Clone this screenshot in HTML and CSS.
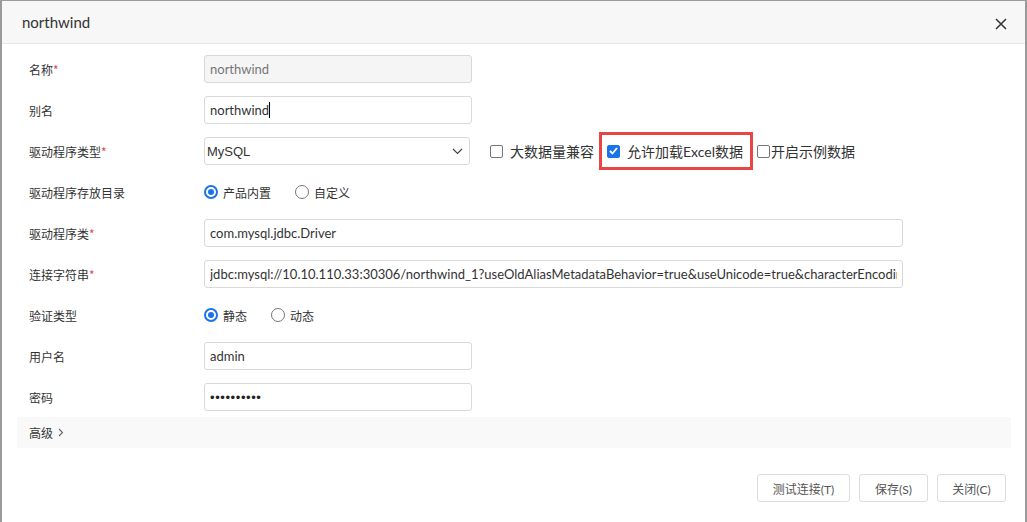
FILE: index.html
```html
<!DOCTYPE html>
<html lang="zh-CN">
  <head>
    <meta charset="UTF-8" />
    <title>northwind</title>
    <link rel="stylesheet" href="styles.css">
  </head>
  <body>
    <div class="dialog">
      <div class="dialog-header">
        <span class="dialog-title">northwind</span>
        <svg class="close" width="12" height="12" viewBox="0 0 12 12">
          <path d="M1 1 L11 11 M11 1 L1 11" stroke="#333" stroke-width="1.5" fill="none" />
        </svg>
      </div>

      <div class="dialog-body">
        <div class="row">
          <div class="label">名称<span class="req">*</span></div>
          <input class="field disabled" type="text" value="northwind" disabled />
        </div>
        <div class="row">
          <div class="label">别名</div>
          <div class="field fake">northwind<span class="caret"></span></div>
        </div>
        <div class="row">
          <div class="label">驱动程序类型<span class="req">*</span></div>
          <div class="field select">
            <span>MySQL</span>
            <svg width="11" height="7" viewBox="0 0 11 7">
              <path d="M1 1 L5.5 5.5 L10 1" stroke="#444" stroke-width="1.2" fill="none" />
            </svg>
          </div>
          <label class="check first">
            <span class="box"></span>大数据量兼容
          </label>
          <div class="highlight">
            <label class="check">
              <span class="box checked">
                <svg width="9" height="8" viewBox="0 0 9 8">
                  <path d="M1 4 L3.5 6.5 L8 1" stroke="#fff" stroke-width="1.8" fill="none" />
                </svg>
              </span>允许加载Excel数据
            </label>
          </div>
          <label class="check tight">
            <span class="box"></span>开启示例数据
          </label>
        </div>
        <div class="row">
          <div class="label">驱动程序存放目录</div>
          <label class="radio"><span class="dot on"></span>产品内置</label>
          <label class="radio"><span class="dot"></span>自定义</label>
        </div>
        <div class="row">
          <div class="label">驱动程序类<span class="req">*</span></div>
          <input class="field wide" type="text" value="com.mysql.jdbc.Driver" />
        </div>
        <div class="row">
          <div class="label">连接字符串<span class="req">*</span></div>
          <input class="field wide" type="text" value="jdbc:mysql://10.10.110.33:30306/northwind_1?useOldAliasMetadataBehavior=true&amp;useUnicode=true&amp;characterEncoding=UTF-8" />
        </div>
        <div class="row">
          <div class="label">验证类型</div>
          <label class="radio"><span class="dot on"></span>静态</label>
          <label class="radio"><span class="dot"></span>动态</label>
        </div>
        <div class="row">
          <div class="label">用户名</div>
          <input class="field" type="text" value="admin" />
        </div>
        <div class="row">
          <div class="label">密码</div>
          <div class="field fake dots">••••••••••</div>
        </div>

        <div class="advanced">
          高级
          <svg class="chev" width="6" height="9" viewBox="0 0 6 9">
            <path d="M1 1 L4.5 4.5 L1 8" stroke="#666" stroke-width="1.1" fill="none" />
          </svg>
        </div>
      </div>

      <div class="dialog-footer">
        <button class="btn test">测试连接(T)</button>
        <button class="btn">保存(S)</button>
        <button class="btn">关闭(C)</button>
      </div>
    </div>
  </body>
</html>
```

FILE: styles.css
```css
body {
  margin: 0;
  width: 1027px;
  height: 522px;
  overflow: hidden;
  background: #fff;
  font-family: Lato, "Noto Sans CJK SC", sans-serif;
  color: #333;
}

.dialog {
  box-sizing: border-box;
  width: 1027px;
  height: 522px;
  border-top: 1px solid #9a9a9a;
  border-left: 2px solid #9a9a9a;
  border-right: 2px solid #9a9a9a;
  background: #fff;
}

.dialog-header {
  height: 42px;
  background: #f7f7f7;
  border-bottom: 1px solid #e6e6e6;
  display: flex;
  align-items: center;
  justify-content: space-between;
  padding: 0 18px 0 20px;
}

.dialog-title {
  font-size: 15px;
  color: #333;
}

.close {
  margin-top: 3px;
}

.dialog-body {
  padding: 11px 14px 0 15px;
}

.row {
  display: flex;
  align-items: center;
  height: 28px;
  margin-bottom: 13px;
}

.label {
  width: 187px;
  padding-left: 12px;
  box-sizing: border-box;
  font-family: "Noto Sans CJK SC", sans-serif;
  font-size: 12px;
  color: #333;
}

.req {
  color: #e5484d;
}

.field {
  box-sizing: border-box;
  width: 268px;
  height: 28px;
  border: 1px solid #d9d9d9;
  border-radius: 3px;
  padding: 0 5px;
  font-family: Lato, "Noto Sans CJK SC", sans-serif;
  font-size: 13px;
  color: #333;
  background: #fff;
  outline: none;
}

.field.disabled {
  background: #f5f5f5;
  color: #777;
}

.field.fake {
  display: flex;
  align-items: center;
}

.field.dots {
  font-family: "Liberation Sans", sans-serif;
  font-size: 13px;
  letter-spacing: 0.6px;
  color: #222;
}

.caret {
  display: inline-block;
  width: 1px;
  height: 16px;
  background: #000;
}

.field.wide {
  width: 699px;
}

.field.select {
  width: 266px;
  display: flex;
  align-items: center;
  justify-content: space-between;
  padding: 0 6px 0 2px;
  font-family: "Liberation Sans", sans-serif;
}

.check {
  display: flex;
  align-items: center;
  font-family: Lato, "Noto Sans CJK SC", sans-serif;
  font-size: 14px;
  color: #333;
}

.check.first {
  margin-left: 20px;
}

.check.tight {
  margin-left: 4px;
}

.check .box {
  box-sizing: border-box;
  width: 13px;
  height: 13px;
  border: 1px solid #767676;
  border-radius: 2px;
  margin-right: 7px;
  display: flex;
  align-items: center;
  justify-content: center;
}

.check.tight .box {
  margin-right: 1px;
}

.check .box.checked {
  background: #1a73e8;
  border-color: #1a73e8;
}

.highlight {
  box-sizing: border-box;
  height: 38px;
  margin-left: 5px;
  border: 3px solid #e84646;
  padding: 0 7px 0 5px;
  display: flex;
  align-items: center;
}

.radio {
  display: flex;
  align-items: center;
  font-family: "Noto Sans CJK SC", sans-serif;
  font-size: 12px;
  color: #333;
  margin-right: 24px;
}

.dot {
  box-sizing: border-box;
  width: 14px;
  height: 14px;
  border: 1px solid #767676;
  border-radius: 50%;
  margin-right: 5px;
  position: relative;
}

.dot.on {
  border: 2px solid #1a73e8;
}

.dot.on::after {
  content: "";
  position: absolute;
  left: 2px;
  top: 2px;
  width: 6px;
  height: 6px;
  border-radius: 50%;
  background: #1a73e8;
}

.advanced {
  margin-top: -7px;
  height: 31px;
  background: #f9f9fa;
  display: flex;
  align-items: center;
  padding-left: 12px;
  font-family: "Noto Sans CJK SC", sans-serif;
  font-size: 12px;
  color: #333;
}

.chev {
  margin-left: 5px;
}

.dialog-footer {
  display: flex;
  justify-content: flex-end;
  gap: 9px;
  padding: 26px 19px 0 0;
}

.btn {
  height: 28px;
  width: 69px;
  border: 1px solid #dcdcdc;
  border-radius: 3px;
  background: #fff;
  font-family: Lato, "Noto Sans CJK SC", sans-serif;
  font-size: 12px;
  color: #555;
  padding: 0;
}

.btn.test {
  width: 93px;
}
```
